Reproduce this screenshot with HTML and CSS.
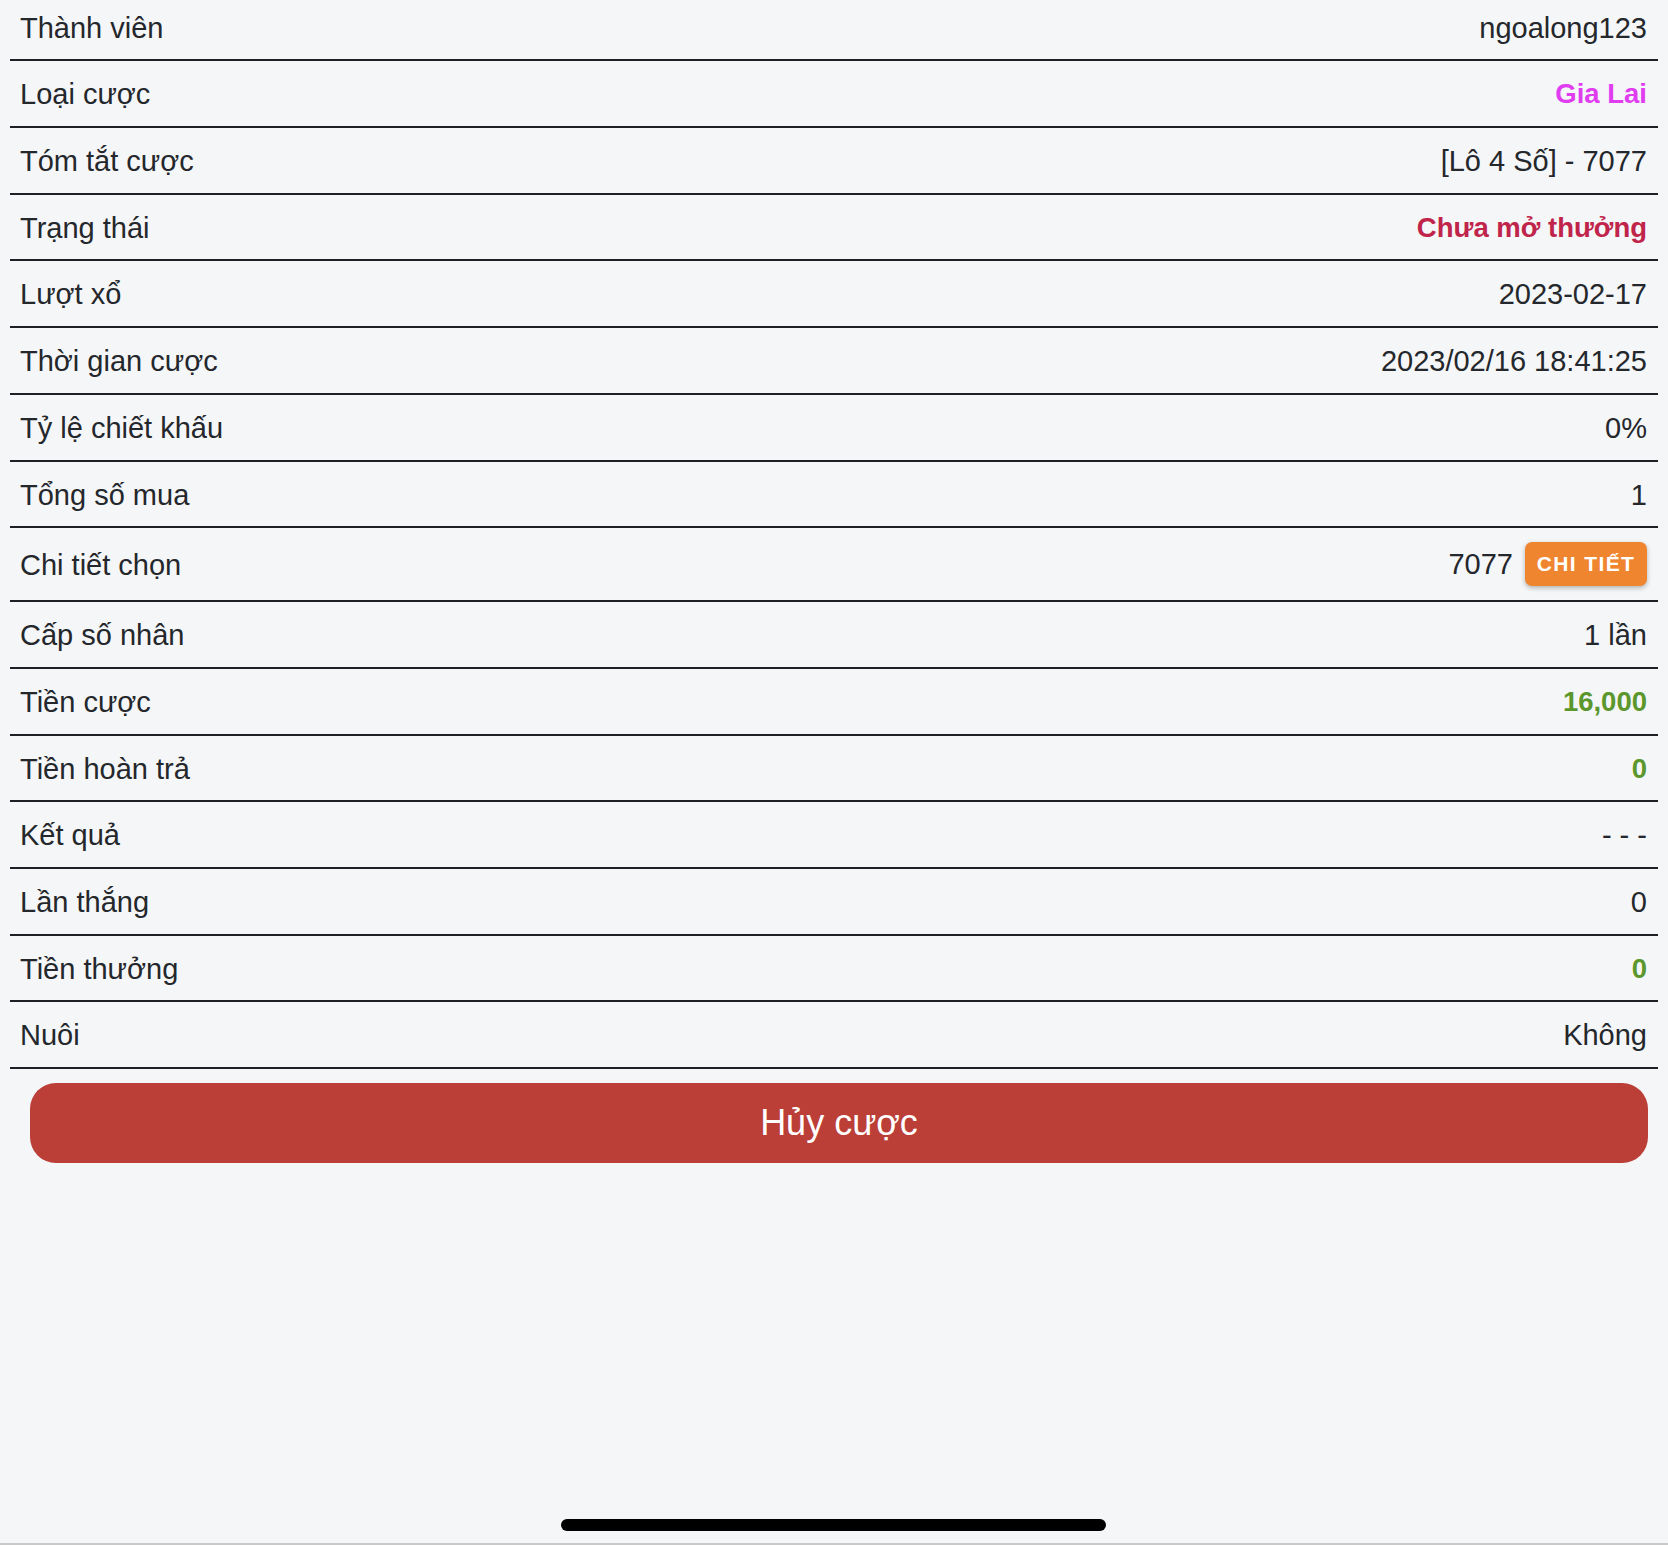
FILE: index.html
```html
<!DOCTYPE html>
<html lang="vi">
<head>
<meta charset="utf-8">
<title>Chi tiết cược</title>
<link rel="stylesheet" href="styles.css">
</head>
<body>
<div class="list">
  <div class="row first"><span class="label">Thành viên</span><span class="value">ngoalong123</span></div>
  <div class="row"><span class="label">Loại cược</span><span class="value bold magenta">Gia Lai</span></div>
  <div class="row"><span class="label">Tóm tắt cược</span><span class="value">[Lô 4 Số] - 7077</span></div>
  <div class="row"><span class="label">Trạng thái</span><span class="value bold crimson">Chưa mở thưởng</span></div>
  <div class="row"><span class="label">Lượt xổ</span><span class="value">2023-02-17</span></div>
  <div class="row"><span class="label">Thời gian cược</span><span class="value">2023/02/16 18:41:25</span></div>
  <div class="row"><span class="label">Tỷ lệ chiết khấu</span><span class="value">0%</span></div>
  <div class="row"><span class="label">Tổng số mua</span><span class="value">1</span></div>
  <div class="row"><span class="label">Chi tiết chọn</span><span class="value detail"><span>7077</span><button class="detail-btn" type="button">CHI TIẾT</button></span></div>
  <div class="row"><span class="label">Cấp số nhân</span><span class="value">1 lần</span></div>
  <div class="row"><span class="label">Tiền cược</span><span class="value bold green">16,000</span></div>
  <div class="row"><span class="label">Tiền hoàn trả</span><span class="value bold green">0</span></div>
  <div class="row"><span class="label">Kết quả</span><span class="value">- - -</span></div>
  <div class="row"><span class="label">Lần thắng</span><span class="value">0</span></div>
  <div class="row"><span class="label">Tiền thưởng</span><span class="value bold green">0</span></div>
  <div class="row"><span class="label">Nuôi</span><span class="value">Không</span></div>
</div>
<button class="cancel" type="button">Hủy cược</button>
<div class="home-indicator"></div>
<div class="bottom-edge"></div>
</body>
</html>
```

FILE: styles.css
```css
html, body {
  margin: 0;
  padding: 0;
  background: #f5f6f8;
}

body {
  font-family: "Liberation Sans", Arial, "Noto Sans", sans-serif;
  color: #24272b;
  min-height: 1545px;
}

.list {
  margin: 0 10px;
}

.row {
  display: flex;
  justify-content: space-between;
  align-items: center;
  padding: 15px 11px 13px 10px;
  border-bottom: 2px solid #1e1f24;
  font-size: 29px;
  line-height: 36.7px;
}

.row.first {
  padding-top: 9.6px;
}

.value {
  text-align: right;
}

.bold {
  font-weight: bold;
  font-size: 27.5px;
}

.magenta {
  color: #e03cf0;
}

.crimson {
  color: #c0244a;
}

.green {
  color: #5b972c;
}

.detail {
  display: flex;
  align-items: center;
  gap: 12px;
  margin: -1px 0 1px;
}

.detail-btn {
  height: 44px;
  width: 122px;
  padding: 0;
  border: none;
  border-radius: 7px;
  background: #f0852f;
  color: #ffffff;
  font-family: "Liberation Sans", Arial, sans-serif;
  font-size: 21px;
  font-weight: bold;
  letter-spacing: 1.4px;
  box-shadow: 0 2px 5px rgba(0, 0, 0, 0.28);
}

.cancel {
  display: block;
  box-sizing: border-box;
  width: calc(100% - 50px);
  height: 80px;
  margin: 14px 20px 0 30px;
  padding: 0;
  border: none;
  border-radius: 26px;
  background: #bb3e37;
  color: #ffffff;
  font-family: "Liberation Sans", Arial, sans-serif;
  font-size: 36px;
}

.home-indicator {
  position: fixed;
  left: 50%;
  bottom: 14px;
  width: 545px;
  height: 12px;
  margin-left: -273px;
  border-radius: 6px;
  background: #000000;
}

.bottom-edge {
  position: fixed;
  left: 0;
  right: 0;
  bottom: 0;
  height: 2px;
  background: #c9c9c9;
}
```
